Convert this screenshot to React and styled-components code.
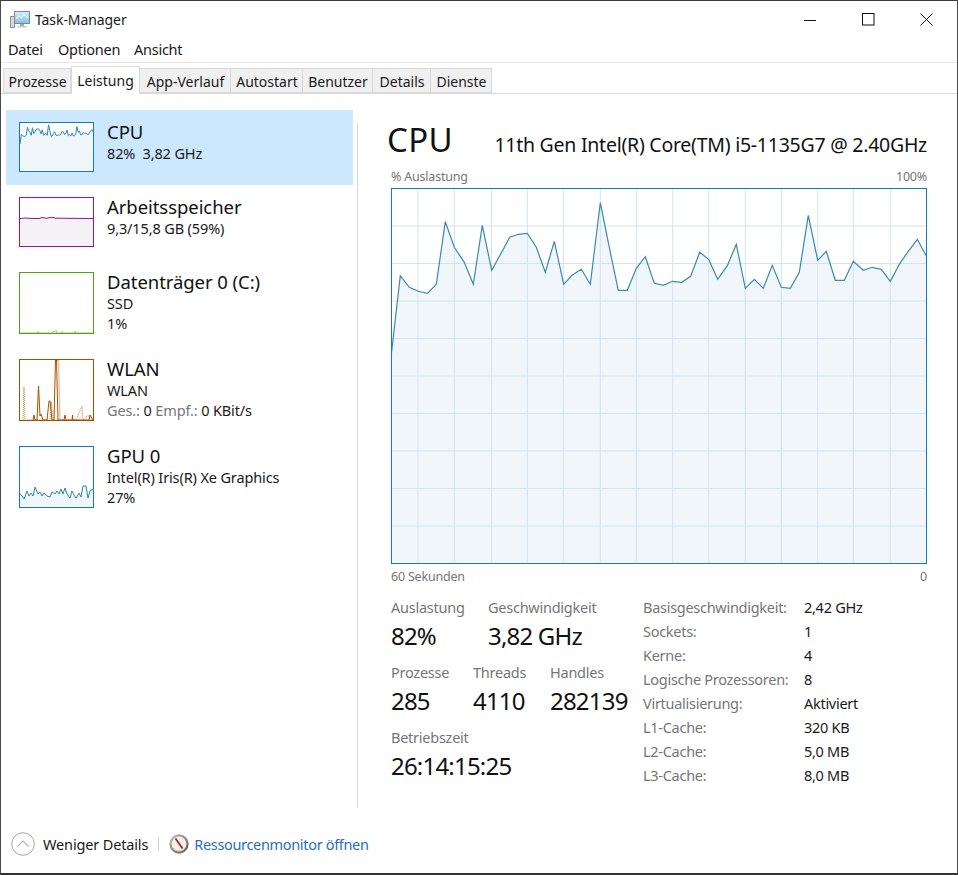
import React from 'react';
import styled, { createGlobalStyle } from 'styled-components';

const GlobalStyle = createGlobalStyle`
  * {
    box-sizing: border-box;
  }
  html, body {
    margin: 0;
    padding: 0;
    background: #fff;
  }
  body {
    font-family: "Noto Sans", "Open Sans", "Liberation Sans", sans-serif;
    color: #1a1a1a;
  }
`;

const Window = styled.div`
  width: 958px;
  height: 875px;
  display: flex;
  flex-direction: column;
  background: #fff;
  border-top: 1px solid #3c3c3c;
  border-left: 1px solid #4a4a4a;
  border-right: 1px solid #4a4a4a;
  border-bottom: 2px solid #333;
  overflow: hidden;
`;

const TitleBar = styled.div`
  height: 37px;
  flex: none;
  display: flex;
  align-items: center;
  padding-left: 9px;
`;

const Title = styled.span`
  margin-left: 5px;
  font-size: 14px;
  letter-spacing: -0.08px;
  flex: 1;
`;

const WinButton = styled.div`
  width: 58px;
  height: 37px;
  display: flex;
  align-items: center;
  justify-content: center;
  &:last-child {
    margin-right: 2px;
  }
`;

const MenuBar = styled.div`
  height: 25px;
  flex: none;
  display: flex;
  align-items: center;
  border-bottom: 1px solid #e6e6e6;
  padding-bottom: 2px;
`;

const MenuItem = styled.span`
  width: ${(p) => p.$w}px;
  padding-left: 7px;
  font-size: 14.5px;
  letter-spacing: -0.25px;
`;

const TabBar = styled.div`
  height: 31px;
  flex: none;
  display: flex;
  align-items: flex-end;
  padding-left: 2px;
  border-bottom: 1px solid #d9d9d9;
`;

const Tab = styled.div`
  width: ${(p) => p.$w}px;
  height: ${(p) => (p.$active ? 28 : 25)}px;
  margin-bottom: ${(p) => (p.$active ? -1 : 0)}px;
  padding: ${(p) => (p.$active ? 0 : '1px 0 0 1px')};
  display: flex;
  align-items: center;
  justify-content: center;
  font-size: 14px;
  background: ${(p) => (p.$active ? '#fff' : '#f0f0f0')};
  border: 1px solid #d9d9d9;
  border-left-width: ${(p) => (p.$active ? 1 : 0)}px;
  border-bottom: ${(p) => (p.$active ? 'none' : '1px solid #d9d9d9')};
  &:first-child {
    border-left-width: 1px;
  }
`;

const Body = styled.div`
  flex: 1;
  display: flex;
  min-height: 0;
`;

const Sidebar = styled.div`
  width: 352px;
  flex: none;
  padding: 16px 0 0 5px;
`;

const Item = styled.div`
  display: flex;
  gap: 13px;
  padding: 12px 13px 13px;
  background: ${(p) => (p.$active ? '#cce8ff' : 'transparent')};
`;

const Thumb = styled.svg`
  width: 75px;
  height: ${(p) => p.$h}px;
  flex: none;
  display: block;
  background: #fff;
  border: 1px solid ${(p) => p.$color};
`;

const ItemText = styled.div`
  display: flex;
  flex-direction: column;
`;

const ItemName = styled.div`
  font-size: 18.5px;
  line-height: 20px;
  letter-spacing: -0.06px;
  margin-bottom: 1px;
  color: #111;
`;

const ItemSub = styled.div`
  font-size: 14.5px;
  line-height: 20px;
  letter-spacing: -0.13px;
`;

const Dim = styled.span`
  color: #767676;
`;

const Divider = styled.div`
  width: 1px;
  height: 686px;
  flex: none;
  margin: 28px 0 0 4px;
  background: #d9d9d9;
`;

const Main = styled.div`
  flex: 1;
  padding: 24px 30px 0 33px;
  min-width: 0;
`;

const HeadRow = styled.div`
  display: flex;
  justify-content: space-between;
  align-items: baseline;
  height: 44px;
`;

const Heading = styled.div`
  font-size: 33px;
  line-height: 44px;
  margin-left: -4px;
  letter-spacing: 0.3px;
  color: #111;
`;

const Model = styled.div`
  font-size: 19.5px;
  letter-spacing: -0.25px;
  color: #111;
`;

const AxisRow = styled.div`
  display: flex;
  justify-content: space-between;
  font-size: 12.5px;
  line-height: 16px;
  letter-spacing: -0.2px;
  color: #767676;
`;

const ChartTop = styled(AxisRow)`
  margin: 7px 0 3px;
`;

const ChartBottom = styled(AxisRow)`
  margin-top: 5px;
`;

const Chart = styled.svg`
  display: block;
  width: 536px;
  height: 376px;
`;

const Details = styled.div`
  display: flex;
  margin-top: 12px;
`;

const Stats = styled.div`
  width: 252px;
  flex: none;
`;

const StatRow = styled.div`
  display: flex;
  height: 65px;
`;

const Stat = styled.div`
  width: ${(p) => p.$w}px;
  flex: none;
`;

const StatLabel = styled.div`
  font-size: 14.5px;
  line-height: 20px;
  letter-spacing: -0.25px;
  color: #767676;
`;

const StatValue = styled.div`
  font-size: 24px;
  line-height: 38px;
  letter-spacing: -0.8px;
  color: #111;
  white-space: nowrap;
`;

const Specs = styled.div`
  display: grid;
  grid-template-columns: 161px 1fr;
  grid-auto-rows: 24px;
  font-size: 14.5px;
  line-height: 24px;
  letter-spacing: -0.28px;
  margin-top: -2px;
`;

const SpecName = styled.div`
  color: #767676;
`;

const SpecValue = styled.div`
  color: #1a1a1a;
`;

const Footer = styled.div`
  height: 54px;
  flex: none;
  display: flex;
  align-items: center;
  padding: 0 0 5px 10px;
`;

const FooterText = styled.span`
  margin-left: 8px;
  font-size: 14.5px;
  letter-spacing: -0.15px;
`;

const FooterSep = styled.div`
  width: 1px;
  height: 14px;
  margin: 0 10px;
  background: #d0d0d0;
`;

const FooterLink = styled.a`
  margin-left: 5px;
  font-size: 14.5px;
  letter-spacing: -0.33px;
  color: #2a6ebb;
`;

const TABS = [
  ['Prozesse', 68],
  ['Leistung', 69, true],
  ['App-Verlauf', 91],
  ['Autostart', 72],
  ['Benutzer', 70],
  ['Details', 58],
  ['Dienste', 61],
];

const MENU = [
  ['Datei', 50],
  ['Optionen', 76],
  ['Ansicht', 70],
];

const SPECS = [
  ['Basisgeschwindigkeit:', '2,42 GHz'],
  ['Sockets:', '1'],
  ['Kerne:', '4'],
  ['Logische Prozessoren:', '8'],
  ['Virtualisierung:', 'Aktiviert'],
  ['L1-Cache:', '320 KB'],
  ['L2-Cache:', '5,0 MB'],
  ['L3-Cache:', '8,0 MB'],
];

// picked off the reference, in page pixels
const CPU_LINE = [
  [391.5, 353], [400.3, 275.7], [409.3, 287.3], [418.3, 291.3], [427.3, 293.3], [436.3, 284.3],
  [445.3, 221.7], [454.3, 247.3], [464.3, 262.3], [473.3, 284.3], [482.3, 225.3], [491.7, 270.3],
  [500.7, 254], [509.7, 237.3], [518.3, 234.3], [527.3, 233.3], [536.3, 247.3], [545.3, 272.3],
  [554.3, 241.3], [563.7, 284.3], [572.3, 275], [581.3, 269.3], [590.3, 284.3], [600.3, 202.7],
  [609.3, 247.3], [618.3, 290.3], [627.3, 290.3], [636.3, 268.3], [645.3, 256.7], [654.3, 283.3],
  [663.3, 285.3], [672.3, 281.3], [681.7, 282.3], [690.7, 276.3], [699.7, 252.3], [708.7, 259.3],
  [717.7, 279.3], [727.3, 265.7], [736.3, 244.3], [745.3, 288.3], [754.3, 279.3], [763.3, 288.3],
  [772.3, 265.3], [781.3, 287.3], [790.3, 288.3], [799.3, 272.3], [808.3, 215.3], [817.7, 260.3],
  [826.3, 251.3], [835.3, 280.3], [844.3, 280.3], [853.3, 261.3], [863.3, 270.3], [872.3, 267.3],
  [881.3, 269.3], [890.3, 281.3], [899.3, 264.3], [908.3, 251.3], [917.3, 239.3], [926.3, 256],
].map(([x, y]) => [x - 391, y - 188]);

const toPoints = (pts) => pts.map(([x, y]) => `${x},${y}`).join(' ');

const V_LINES = [27, 63.3, 100.5, 136.3, 172.3, 209.3, 245.3, 281.7, 317.7, 354.3, 390.3, 426.7, 462.3, 499.3];
const H_LINES = [38, 75.5, 113, 150.5, 188, 225.5, 263, 300.5, 338];

const CpuChart = () => (
  <Chart viewBox="0 0 536 376">
    <rect width="536" height="376" fill="#fff" />
    <polygon
      points={toPoints([[0.5, 375.5], ...CPU_LINE, [535.5, 375.5]])}
      fill="#f1f6fa"
    />
    {V_LINES.map((x) => (
      <line key={x} x1={x} x2={x} y1="0" y2="376" stroke="#d2e3ee" strokeWidth="1" />
    ))}
    {H_LINES.map((y) => (
      <line key={y} x1="0" x2="536" y1={y} y2={y} stroke="#d2e3ee" strokeWidth="1" />
    ))}
    <polyline points={toPoints(CPU_LINE)} fill="none" stroke="#3c88b5" strokeWidth="1.2" />
    <rect x="0.5" y="0.5" width="535" height="375" fill="none" stroke="#117dbb" />
  </Chart>
);

const CpuThumb = () => {
  const pts = CPU_LINE.map(([x, y]) => [(x * 73) / 535, (y * 48) / 375]);
  return (
    <Thumb $h={50} $color="#117dbb" viewBox="0 0 73 48">
      <polygon points={toPoints([[0, 48], ...pts, [73, 48]])} fill="#f1f6fa" />
      <polyline points={toPoints(pts)} fill="none" stroke="#2f86b8" strokeWidth="1" />
    </Thumb>
  );
};

const MemThumb = () => (
  <Thumb $h={50} $color="#8b12ae" viewBox="0 0 73 48">
    <rect x="0" y="20" width="73" height="28" fill="#f4f2f4" />
    <polyline
      points="0,20.5 6,20 12,20.5 19,20.5 22,19.5 26,20.3 30,19.6 34,19.4 35,20.2 73,20.5"
      fill="none"
      stroke="#8b12ae"
      strokeWidth="1"
    />
  </Thumb>
);

const DiskThumb = () => (
  <Thumb $h={62} $color="#4da60c" viewBox="0 0 73 60">
    <polyline
      points="0,60 17,60 18,58.5 19,60 32,60 34,58 35,58.5 36,57.5 37,60 41,60 42,58.5 43,60 54,60 55,58 56,60 73,60"
      fill="#e9f4df"
      stroke="#7fbf50"
      strokeWidth="0.8"
    />
  </Thumb>
);

const WlanThumb = () => (
  <Thumb $h={62} $color="#a74f01" viewBox="0 0 73 60">
    <polyline
      points="3,60 4,27 5,60 30,60 31.5,42 33,60 56,60 62,46 63,60 68,55 72,60"
      fill="#fbf3ec"
      stroke="#c98a58"
      strokeWidth="1"
      strokeDasharray="1 1"
    />
    <polyline
      points="13,60 14,55 15,60 17,60 18.5,26 20,56 21,54 23,60 27,60 29,41 30,41 32,60 34,60 35.5,0 36.5,0 38,60 44,60 45,55 46,60 52,60 52.5,55 53,60 69,60 70,55 73,60"
      fill="none"
      stroke="#a74f01"
      strokeWidth="1"
    />
    <polyline points="37,0 38.5,0 40,60" fill="none" stroke="#c98a58" strokeWidth="1.4" strokeDasharray="1 1" />
  </Thumb>
);

const GPU_POINTS = [
  [0, 47], [2, 49], [4, 52], [7, 44], [9, 49], [11, 46], [13, 49], [15, 40], [18, 47], [20, 45],
  [22, 49], [24, 46], [27, 49], [30, 50], [32, 45], [35, 47], [37, 44], [39, 47], [41, 42], [43, 47],
  [45, 41], [47, 47], [50, 51], [52, 44], [54, 48], [56, 51], [59, 46], [61, 50], [63, 39], [66, 39],
  [68, 51], [70, 44], [73, 42],
];

const GpuThumb = () => (
  <Thumb $h={62} $color="#117dbb" viewBox="0 0 73 60">
    <polygon points={toPoints([[0, 60], ...GPU_POINTS, [73, 60]])} fill="#f1f6fa" />
    <polyline points={toPoints(GPU_POINTS)} fill="none" stroke="#2f86b8" strokeWidth="1" />
  </Thumb>
);

const AppIcon = () => (
  <svg width="20" height="18" viewBox="0 0 20 18">
    <defs>
      <linearGradient id="screen" x1="0" y1="0" x2="0" y2="1">
        <stop offset="0" stopColor="#d6effa" />
        <stop offset="1" stopColor="#7cc3e6" />
      </linearGradient>
    </defs>
    <rect x="0.5" y="5.5" width="4" height="11" fill="#d8d8cf" stroke="#8f9490" />
    <rect x="4.5" y="0.5" width="15" height="12" fill="url(#screen)" stroke="#7f8a90" />
    <polyline points="6,8 9,4.5 11,7 14,3.5 18,7" fill="none" stroke="#fff" strokeWidth="1" />
    <rect x="10" y="13" width="4" height="2" fill="#a4acb0" />
    <rect x="7.5" y="15" width="9" height="1.5" fill="#c4cacc" />
  </svg>
);

const MinIcon = () => (
  <svg width="14" height="12" viewBox="0 0 14 12">
    <line x1="1" x2="13" y1="6.5" y2="6.5" stroke="#111" />
  </svg>
);

const MaxIcon = () => (
  <svg width="13" height="13" viewBox="0 0 13 13">
    <rect x="0.5" y="0.5" width="11.5" height="11.5" fill="none" stroke="#111" />
  </svg>
);

const CloseIcon = () => (
  <svg width="13" height="13" viewBox="0 0 13 13">
    <path d="M0.5 0.5 L12.5 12.5 M12.5 0.5 L0.5 12.5" stroke="#111" fill="none" />
  </svg>
);

const ChevronCircle = () => (
  <svg width="24" height="24" viewBox="0 0 24 24">
    <circle cx="12" cy="12" r="11.3" fill="#fff" stroke="#a5a5a5" />
    <polyline points="6.5,14.5 12,9 17.5,14.5" fill="none" stroke="#b5b5b5" strokeWidth="1.2" />
  </svg>
);

const GaugeIcon = () => (
  <svg width="20" height="20" viewBox="0 0 20 20">
    <defs>
      <linearGradient id="ring" x1="0" y1="0" x2="1" y2="1">
        <stop offset="0" stopColor="#c9c4b8" />
        <stop offset="1" stopColor="#55595c" />
      </linearGradient>
    </defs>
    <circle cx="10" cy="10" r="9.7" fill="url(#ring)" />
    <circle cx="10" cy="10" r="7.4" fill="#f6f1e6" />
    <path d="M6.5 4.5 L13.5 14.5" stroke="#b3202a" strokeWidth="1.8" />
    <path d="M4 13.5 A7 7 0 0 0 16 13.5" fill="none" stroke="#c6c6c6" />
  </svg>
);

const App = () => {
  return (
    <Window>
      <GlobalStyle />
      <TitleBar>
        <AppIcon />
        <Title>Task-Manager</Title>
        <WinButton><MinIcon /></WinButton>
        <WinButton><MaxIcon /></WinButton>
        <WinButton><CloseIcon /></WinButton>
      </TitleBar>
      <MenuBar>
        {MENU.map(([name, w]) => (
          <MenuItem key={name} $w={w}>{name}</MenuItem>
        ))}
      </MenuBar>
      <TabBar>
        {TABS.map(([name, w, active]) => (
          <Tab key={name} $w={w} $active={active}>{name}</Tab>
        ))}
      </TabBar>
      <Body>
        <Sidebar>
          <Item $active>
            <CpuThumb />
            <ItemText>
              <ItemName>CPU</ItemName>
              <ItemSub>82%&nbsp; 3,82 GHz</ItemSub>
            </ItemText>
          </Item>
          <Item>
            <MemThumb />
            <ItemText>
              <ItemName>Arbeitsspeicher</ItemName>
              <ItemSub>9,3/15,8 GB (59%)</ItemSub>
            </ItemText>
          </Item>
          <Item>
            <DiskThumb />
            <ItemText>
              <ItemName>Datenträger 0 (C:)</ItemName>
              <ItemSub>SSD</ItemSub>
              <ItemSub>1%</ItemSub>
            </ItemText>
          </Item>
          <Item>
            <WlanThumb />
            <ItemText>
              <ItemName>WLAN</ItemName>
              <ItemSub>WLAN</ItemSub>
              <ItemSub><Dim>Ges.:</Dim> 0 <Dim>Empf.:</Dim> 0 KBit/s</ItemSub>
            </ItemText>
          </Item>
          <Item>
            <GpuThumb />
            <ItemText>
              <ItemName>GPU 0</ItemName>
              <ItemSub>Intel(R) Iris(R) Xe Graphics</ItemSub>
              <ItemSub>27%</ItemSub>
            </ItemText>
          </Item>
        </Sidebar>
        <Divider />
        <Main>
          <HeadRow>
            <Heading>CPU</Heading>
            <Model>11th Gen Intel(R) Core(TM) i5-1135G7 @ 2.40GHz</Model>
          </HeadRow>
          <ChartTop>
            <span>% Auslastung</span>
            <span>100%</span>
          </ChartTop>
          <CpuChart />
          <ChartBottom>
            <span>60 Sekunden</span>
            <span>0</span>
          </ChartBottom>
          <Details>
            <Stats>
              <StatRow>
                <Stat $w={97}>
                  <StatLabel>Auslastung</StatLabel>
                  <StatValue>82%</StatValue>
                </Stat>
                <Stat $w={150}>
                  <StatLabel>Geschwindigkeit</StatLabel>
                  <StatValue>3,82 GHz</StatValue>
                </Stat>
              </StatRow>
              <StatRow>
                <Stat $w={82}>
                  <StatLabel>Prozesse</StatLabel>
                  <StatValue>285</StatValue>
                </Stat>
                <Stat $w={77}>
                  <StatLabel>Threads</StatLabel>
                  <StatValue>4110</StatValue>
                </Stat>
                <Stat $w={90}>
                  <StatLabel>Handles</StatLabel>
                  <StatValue>282139</StatValue>
                </Stat>
              </StatRow>
              <StatRow>
                <Stat $w={200}>
                  <StatLabel>Betriebszeit</StatLabel>
                  <StatValue>26:14:15:25</StatValue>
                </Stat>
              </StatRow>
            </Stats>
            <Specs>
              {SPECS.map(([name, value]) => (
                <React.Fragment key={name}>
                  <SpecName>{name}</SpecName>
                  <SpecValue>{value}</SpecValue>
                </React.Fragment>
              ))}
            </Specs>
          </Details>
        </Main>
      </Body>
      <Footer>
        <ChevronCircle />
        <FooterText>Weniger Details</FooterText>
        <FooterSep />
        <GaugeIcon />
        <FooterLink>Ressourcenmonitor öffnen</FooterLink>
      </Footer>
    </Window>
  );
};

export default App;
